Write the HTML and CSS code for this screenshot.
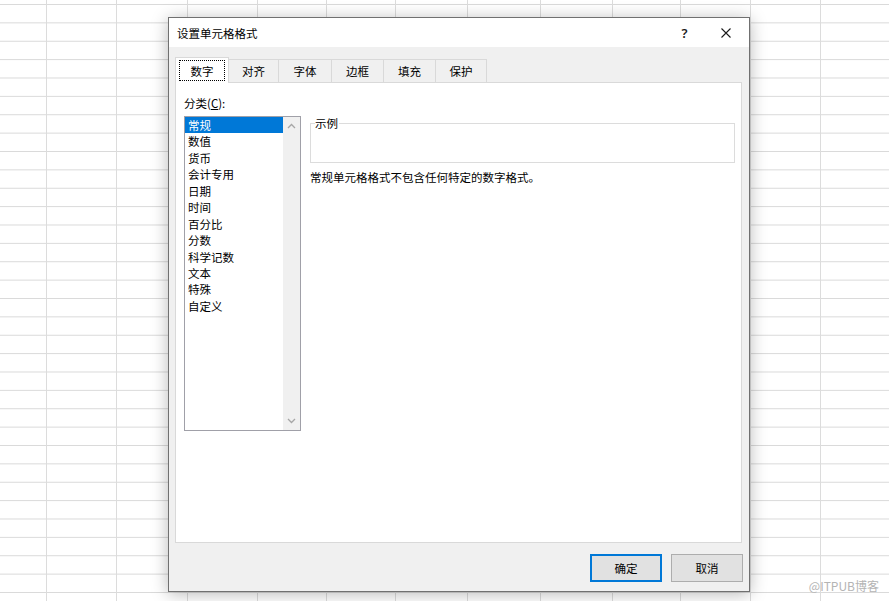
FILE: index.html
```html
<!DOCTYPE html>
<html lang="zh-CN">
<head>
<meta charset="utf-8">
<title>设置单元格格式</title>
<link rel="stylesheet" href="styles.css">
</head>
<body>
<div class="dialog">
  <div class="titlebar">
    <span class="title">设置单元格格式</span>
    <span class="help">?</span>
    <span class="close">
      <svg width="10" height="10" viewBox="0 0 10 10"><path d="M0.5 0.5 L9.5 9.5 M9.5 0.5 L0.5 9.5" stroke="#1a1a1a" stroke-width="1.1" fill="none"/></svg>
    </span>
  </div>
  <div class="body">
    <div class="tabs">
      <div class="tab active w1"><span class="focus">数字</span></div>
      <div class="tab w2">对齐</div>
      <div class="tab w3">字体</div>
      <div class="tab w4">边框</div>
      <div class="tab w5">填充</div>
      <div class="tab w6">保护</div>
    </div>
    <div class="panel">
      <div class="label">分类(<u>C</u>):</div>
      <div class="content">
        <div class="listbox">
          <ul class="items">
            <li class="selected">常规</li>
            <li>数值</li>
            <li>货币</li>
            <li>会计专用</li>
            <li>日期</li>
            <li>时间</li>
            <li>百分比</li>
            <li>分数</li>
            <li>科学记数</li>
            <li>文本</li>
            <li>特殊</li>
            <li>自定义</li>
          </ul>
          <div class="scrollbar">
            <svg class="arrow" width="9" height="6" viewBox="0 0 9 6"><path d="M1 5 L4.5 1.5 L8 5" stroke="#a6a6a6" stroke-width="1.3" fill="none"/></svg>
            <svg class="arrow" width="9" height="6" viewBox="0 0 9 6"><path d="M1 1 L4.5 4.5 L8 1" stroke="#a6a6a6" stroke-width="1.3" fill="none"/></svg>
          </div>
        </div>
        <div class="right">
          <fieldset class="sample">
            <legend>示例</legend>
            <div class="sample-area"></div>
          </fieldset>
          <p class="desc">常规单元格格式不包含任何特定的数字格式。</p>
        </div>
      </div>
    </div>
    <div class="footer">
      <button class="btn primary">确定</button>
      <button class="btn">取消</button>
    </div>
  </div>
</div>
<div class="watermark">@ITPUB博客</div>
</body>
</html>
```

FILE: styles.css
```css
html, body {
  margin: 0;
  padding: 0;
  width: 889px;
  height: 601px;
  overflow: hidden;
}

body {
  position: relative;
  font-family: "Noto Sans CJK SC", "Microsoft YaHei", sans-serif;
  font-size: 11.5px;
  color: #000;
  background-color: #fff;
  background-image:
    linear-gradient(#dcdcdc, #dcdcdc),
    linear-gradient(#dcdcdc, #dcdcdc),
    linear-gradient(#dcdcdc, #dcdcdc),
    linear-gradient(#dcdcdc, #dcdcdc),
    linear-gradient(#dcdcdc, #dcdcdc),
    linear-gradient(#dcdcdc, #dcdcdc),
    linear-gradient(#dcdcdc, #dcdcdc),
    linear-gradient(#dcdcdc, #dcdcdc),
    linear-gradient(#dcdcdc, #dcdcdc),
    linear-gradient(#dcdcdc, #dcdcdc),
    linear-gradient(#dcdcdc, #dcdcdc),
    linear-gradient(#dcdcdc, #dcdcdc),
    linear-gradient(to bottom, #d9d9d9 0, #d9d9d9 1px, transparent 1px, transparent 18.375px);
  background-size:
    1px 100%, 1px 100%, 1px 100%, 1px 100%, 1px 100%, 1px 100%,
    1px 100%, 1px 100%, 1px 100%, 1px 100%, 1px 100%, 1px 100%,
    100% 18.375px;
  background-position:
    46px 0, 116px 0, 187px 0, 257px 0, 326px 0, 395px 0,
    467px 0, 540px 0, 612px 0, 680px 0, 750px 0, 820px 0,
    0 4px;
  background-repeat:
    no-repeat, no-repeat, no-repeat, no-repeat, no-repeat, no-repeat,
    no-repeat, no-repeat, no-repeat, no-repeat, no-repeat, no-repeat,
    repeat-y;
}

.dialog {
  box-sizing: border-box;
  width: 582px;
  height: 575px;
  margin: 17px 0 0 168px;
  border: 1px solid #707070;
  background: #f0f0f0;
  box-shadow: 0 2px 16px rgba(0, 0, 0, 0.28);
  display: flex;
  flex-direction: column;
}

.titlebar {
  height: 29px;
  background: #fff;
  display: flex;
  align-items: center;
  padding-left: 8px;
}

.title {
  flex: 1;
  line-height: 16px;
}

.help {
  width: 37px;
  text-align: center;
  font-family: "Segoe UI", "Noto Sans", sans-serif;
  font-size: 13px;
  font-weight: 600;
  line-height: 16px;
  color: #1a1a1a;
}

.close {
  width: 46px;
  height: 29px;
  display: flex;
  align-items: center;
  justify-content: center;
}

.body {
  flex: 1;
  padding: 10px 7px 0 6px;
  display: flex;
  flex-direction: column;
}

.tabs {
  display: flex;
  align-items: flex-end;
  height: 25px;
}

.tab {
  box-sizing: border-box;
  height: 23px;
  border: 1px solid #d9d9d9;
  border-bottom: none;
  margin-left: -1px;
  background: #f0f0f0;
  display: flex;
  align-items: center;
  justify-content: center;
  line-height: 16px;
}

.tab.active {
  position: relative;
  z-index: 1;
  height: 26px;
  margin-left: 0;
  margin-bottom: -1px;
  background: #fff;
  align-items: flex-start;
  padding-top: 2px;
}

.w1 { width: 54px; }
.w2 { width: 51px; }
.w3 { width: 54px; }
.w4 { width: 53px; }
.w5 { width: 53px; }
.w6 { width: 52px; }

.focus {
  box-sizing: border-box;
  width: 46px;
  height: 21px;
  border: 1px dotted #000;
  display: flex;
  align-items: center;
  justify-content: center;
}

.panel {
  box-sizing: border-box;
  height: 461px;
  border: 1px solid #d9d9d9;
  background: #fff;
  padding: 12px 0 0 8px;
}

.label {
  line-height: 16px;
  margin-bottom: 5px;
}

.content {
  display: flex;
  align-items: flex-start;
}

.listbox {
  box-sizing: border-box;
  width: 117px;
  height: 315px;
  border: 1px solid #a0a0a8;
  display: flex;
}

.items {
  list-style: none;
  margin: 0;
  padding: 0;
  width: 98px;
}

.items li {
  height: 16.45px;
  line-height: 16.45px;
  padding-left: 3px;
  white-space: nowrap;
}

.items li.selected {
  background: #0078d7;
  color: #fff;
}

.scrollbar {
  width: 17px;
  background: #f0f0f0;
  display: flex;
  flex-direction: column;
  justify-content: space-between;
  align-items: center;
  padding: 6px 0 6px;
}

.right {
  margin-left: 9px;
  width: 425px;
}

.sample {
  margin: 0;
  padding: 0 4px;
  border: 1px solid #dcdcdc;
  min-width: 0;
}

.sample legend {
  padding: 0 1px 0 0;
  line-height: 14px;
}

.sample-area {
  height: 32px;
}

.desc {
  margin: 6px 0 0 0;
  line-height: 16px;
}

.footer {
  display: flex;
  justify-content: flex-end;
  gap: 9px;
  margin-top: 11px;
  margin-right: -1px;
}

.btn {
  box-sizing: border-box;
  width: 72px;
  height: 28px;
  border: 1px solid #adadad;
  background: #e1e1e1;
  font-family: "Noto Sans CJK SC", "Microsoft YaHei", sans-serif;
  font-size: 11.5px;
  color: #000;
  padding: 0;
}

.btn.primary {
  border: 2px solid #0078d7;
}

.watermark {
  position: absolute;
  right: 10px;
  top: 578px;
  font-size: 12px;
  line-height: 16px;
  color: #b4b4b4;
}
```
